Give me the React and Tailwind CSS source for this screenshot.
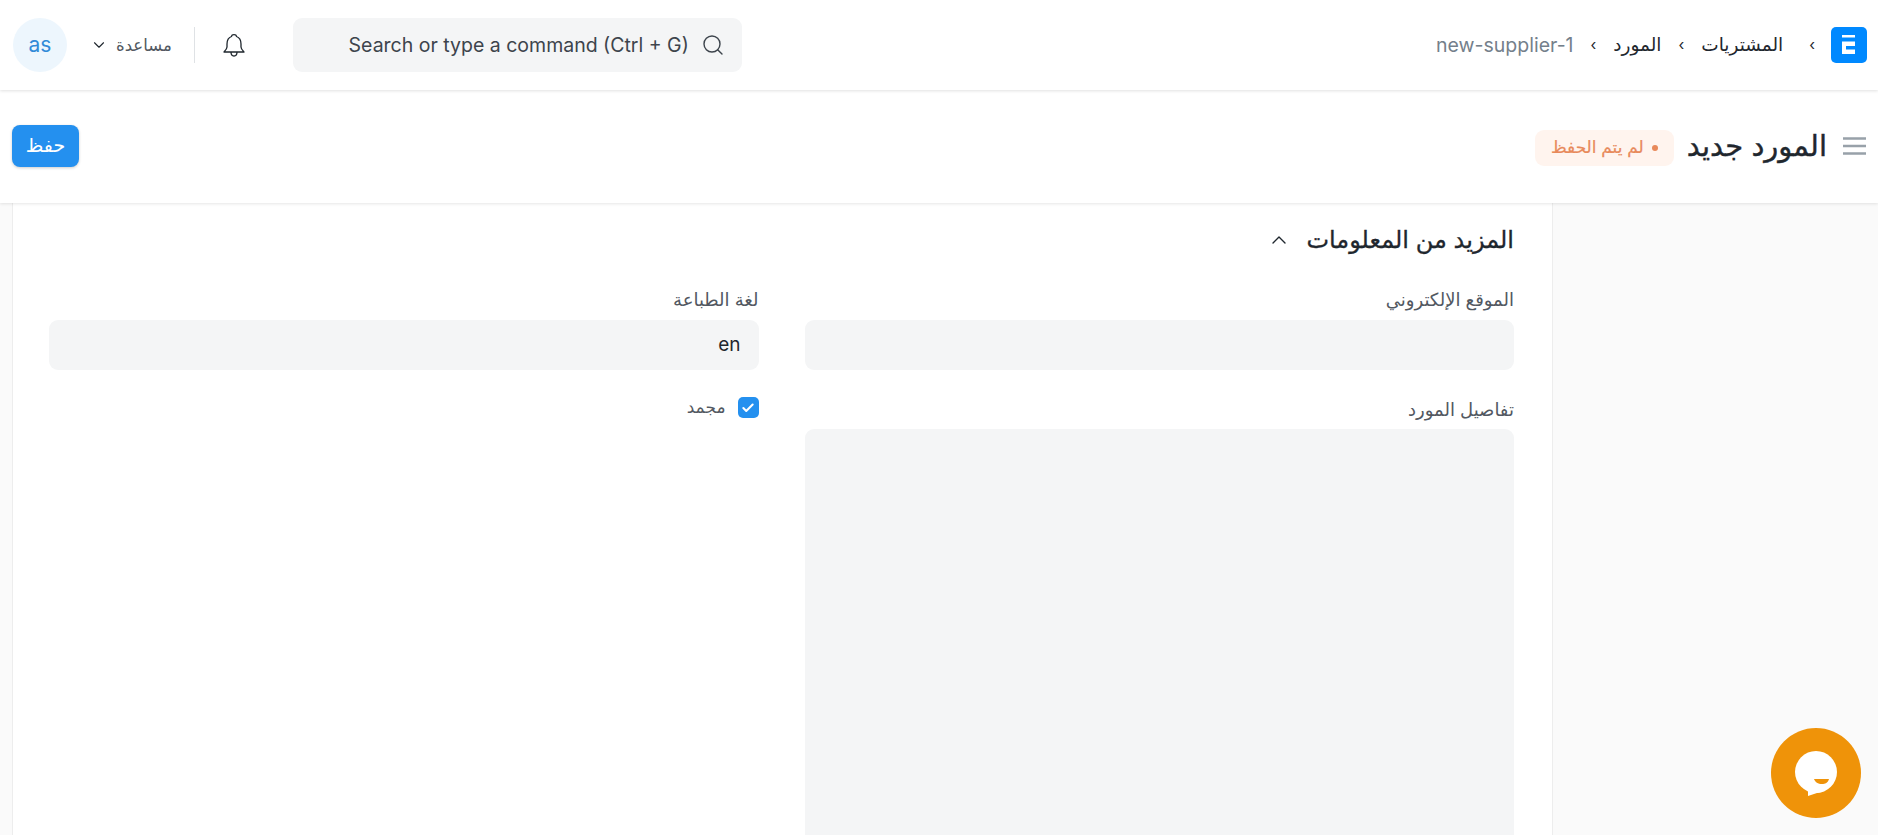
import { ChevronDown, ChevronUp, Search, Check } from "lucide-react";

function Logo() {
  return (
    <svg viewBox="0 0 36 36" className="w-9 h-9 shrink-0">
      <rect width="36" height="36" rx="5" fill="#0089ff" />
      <path d="M11 8h13v2.5H11z" fill="#fff" />
      <path fillRule="evenodd" d="M11 14.5h13V27H11z M15 19v3.5h9V19z" fill="#fff" />
    </svg>
  );
}

function BellIcon() {
  return (
    <svg viewBox="0 0 22 26" className="w-[22px] h-[26px] mr-[48px]" fill="none" stroke="#1f272e" strokeWidth="1.3" strokeLinejoin="round">
      <path d="M8.5 4.5C8.8 2 13.2 2 13.5 4.5C16.5 5.5 18 8.5 18 12V15C18 17 19.5 18.5 21 20H1C2.5 18.5 4 17 4 15V12C4 8.5 5.5 5.5 8.5 4.5Z" />
      <path d="M8 20c0 2.5 1.5 4 3 4s3-1.5 3-4" />
    </svg>
  );
}

function MenuIcon() {
  return (
    <svg viewBox="0 0 23 18" className="w-[23px] h-[18px] shrink-0" stroke="#98a1a9" strokeWidth="2.4">
      <path d="M0 1.5h23M0 9h23M0 16.5h23" />
    </svg>
  );
}

function Crumb() {
  return <span className="text-[#1f272e] text-[15px] px-[17px]">›</span>;
}

function Field({ label, value }) {
  return (
    <div>
      <div className="text-[18px] text-[#525861] leading-5 mb-[10px]">{label}</div>
      <div className="h-[50px] bg-[#f4f5f6] rounded-[9px] px-[18px] flex items-center text-[#1f272e] text-[19px]">{value}</div>
    </div>
  );
}

export default function App() {
  return (
    <div dir="rtl" className="h-[835px] overflow-hidden bg-[#fafafa] flex flex-col font-['Inter','Noto_Sans','DejaVu_Sans',sans-serif]">
      {/* Navbar */}
      <header className="h-[90px] shrink-0 bg-white flex items-center justify-between pr-[11px] pl-[13px] shadow-[0_1px_3px_rgba(0,0,0,0.12)] relative z-20">
        <div className="flex items-center">
          <Logo />
          <span className="text-[#1f272e] text-[15px] pr-[16px] pl-[26px]">›</span>
          <span className="text-[#1f272e] text-[18.5px]">المشتريات</span>
          <Crumb />
          <span className="text-[#1f272e] text-[18.5px]">المورد</span>
          <Crumb />
          <span dir="ltr" className="text-[#74808b] text-[19.5px] pt-px">new-supplier-1</span>
        </div>
        <div className="flex items-center">
          <div className="w-[449px] h-[54px] bg-[#f4f5f6] rounded-[9px] flex items-center pr-[17px] gap-[12px] text-[#3d444c]">
            <Search className="w-6 h-6 shrink-0" strokeWidth={1.4} />
            <span dir="ltr" className="text-[19.5px] whitespace-nowrap pt-px">Search or type a command (Ctrl + G)</span>
          </div>
          <BellIcon />
          <div className="w-px h-9 bg-[#dfe2e5] mr-[28px]" />
          <div className="flex items-center gap-[8px] mr-[22px] text-[#525861]">
            <span className="text-[16.5px]">مساعدة</span>
            <ChevronDown className="w-[18px] h-[18px] text-[#1f272e]" strokeWidth={1.5} />
          </div>
          <div className="w-[54px] h-[54px] rounded-full bg-[#edf6fd] text-[#318ad8] flex items-center justify-center text-[21px] mr-[23px]">as</div>
        </div>
      </header>

      {/* Page head */}
      <div className="h-[113px] shrink-0 bg-white flex items-center justify-between pr-[12px] pl-[12px] pb-px shadow-[0_1px_3px_rgba(0,0,0,0.1)] relative z-10">
        <div className="flex items-center">
          <MenuIcon />
          <h1 className="text-[29px] text-[#1f272e] mr-[16px] whitespace-nowrap [-webkit-text-stroke:0.4px_#1f272e]">المورد جديد</h1>
          <div className="mr-[13px] mt-[3px] h-9 w-[139px] rounded-[9px] bg-[#fff4ee] text-[#e8895a] text-[17px] flex items-center justify-center gap-2 [-webkit-text-stroke:0.2px_#e8895a]">
            <span className="w-[6px] h-[6px] rounded-full bg-[#e8895a]" />
            لم يتم الحفظ
          </div>
        </div>
        <button className="w-[67px] h-[42px] rounded-lg bg-[#2490ef] text-white text-[19px] shadow-[0_1px_3px_rgba(0,0,0,0.2)]">حفظ</button>
      </div>

      {/* Body */}
      <div className="flex-1 min-h-0 flex pr-[325px] pl-[12px]">
        <main className="flex-1 bg-white border-x border-[#ededed] pt-[20px] pr-[38px] pl-[36px]">
          <div className="flex items-center gap-[15px] h-[34px]">
            <h2 className="text-[24px] text-[#1f272e] [-webkit-text-stroke:0.3px_#1f272e]">المزيد من المعلومات</h2>
            <ChevronUp className="w-6 h-6 text-[#1f272e]" strokeWidth={1.4} />
          </div>
          <div className="grid grid-cols-2 gap-x-[46px] mt-[33px]">
            <div>
              <Field label="الموقع الإلكتروني" />
              <div className="text-[18px] text-[#525861] leading-5 mt-[30px] mb-[9px]">تفاصيل المورد</div>
              <div className="h-[500px] bg-[#f4f5f6] rounded-[9px]" />
            </div>
            <div>
              <Field label="لغة الطباعة" value="en" />
              <div className="flex items-center gap-[12px] mt-[25px]">
                <span className="w-[21px] h-[21px] rounded-[5px] bg-[#2490ef] flex items-center justify-center">
                  <Check className="w-[14px] h-[14px] text-white" strokeWidth={3.5} />
                </span>
                <span className="text-[17px] text-[#525861]">مجمد</span>
              </div>
            </div>
          </div>
        </main>
      </div>

      {/* Chat launcher */}
      <div className="fixed right-[17px] bottom-[17px] w-[90px] h-[90px] rounded-full bg-[#ef9309] z-30">
        <svg viewBox="0 0 90 90" className="w-full h-full">
          <circle cx="45" cy="44" r="21" fill="#fff" />
          <path d="M37 60 L37 68 L52 63z" fill="#fff" />
          <path d="M43 51 h15 c-1 4 -4 5 -7 5 c-4 0 -7 -2 -8 -5z" fill="#ef9309" />
        </svg>
      </div>
    </div>
  );
}
